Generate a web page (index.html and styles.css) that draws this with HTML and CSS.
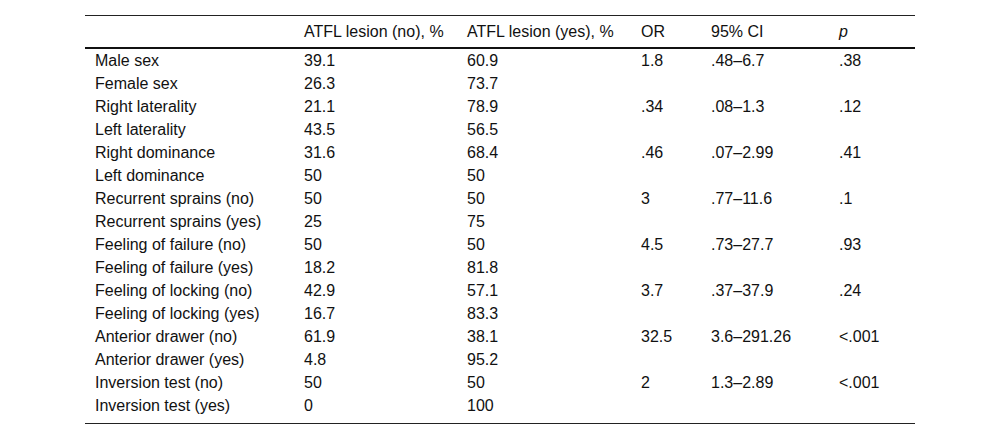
FILE: index.html
```html
<!DOCTYPE html>
<html lang="en">
<head>
<meta charset="utf-8">
<title>ATFL lesion table</title>
<link rel="stylesheet" href="styles.css">
</head>
<body>
<div class="wrap">
<table class="data">
<colgroup>
<col class="c1"><col class="c2"><col class="c3"><col class="c4"><col class="c5"><col class="c6">
</colgroup>
<thead>
<tr><th></th><th>ATFL lesion (no), %</th><th>ATFL lesion (yes), %</th><th>OR</th><th>95% CI</th><th><i>p</i></th></tr>
</thead>
<tbody>
<tr><td>Male sex</td><td>39.1</td><td>60.9</td><td>1.8</td><td>.48–6.7</td><td>.38</td></tr>
<tr><td>Female sex</td><td>26.3</td><td>73.7</td><td></td><td></td><td></td></tr>
<tr><td>Right laterality</td><td>21.1</td><td>78.9</td><td>.34</td><td>.08–1.3</td><td>.12</td></tr>
<tr><td>Left laterality</td><td>43.5</td><td>56.5</td><td></td><td></td><td></td></tr>
<tr><td>Right dominance</td><td>31.6</td><td>68.4</td><td>.46</td><td>.07–2.99</td><td>.41</td></tr>
<tr><td>Left dominance</td><td>50</td><td>50</td><td></td><td></td><td></td></tr>
<tr><td>Recurrent sprains (no)</td><td>50</td><td>50</td><td>3</td><td>.77–11.6</td><td>.1</td></tr>
<tr><td>Recurrent sprains (yes)</td><td>25</td><td>75</td><td></td><td></td><td></td></tr>
<tr><td>Feeling of failure (no)</td><td>50</td><td>50</td><td>4.5</td><td>.73–27.7</td><td>.93</td></tr>
<tr><td>Feeling of failure (yes)</td><td>18.2</td><td>81.8</td><td></td><td></td><td></td></tr>
<tr><td>Feeling of locking (no)</td><td>42.9</td><td>57.1</td><td>3.7</td><td>.37–37.9</td><td>.24</td></tr>
<tr><td>Feeling of locking (yes)</td><td>16.7</td><td>83.3</td><td></td><td></td><td></td></tr>
<tr><td>Anterior drawer (no)</td><td>61.9</td><td>38.1</td><td>32.5</td><td>3.6–291.26</td><td>&lt;.001</td></tr>
<tr><td>Anterior drawer (yes)</td><td>4.8</td><td>95.2</td><td></td><td></td><td></td></tr>
<tr><td>Inversion test (no)</td><td>50</td><td>50</td><td>2</td><td>1.3–2.89</td><td>&lt;.001</td></tr>
<tr class="last"><td>Inversion test (yes)</td><td>0</td><td>100</td><td></td><td></td><td></td></tr>
</tbody>
</table>
</div>
</body>
</html>
```
FILE: styles.css
```css
html, body {
  margin: 0;
  padding: 0;
  background: #fff;
}
body {
  font-family: "Liberation Sans", Arial, sans-serif;
  font-size: 16px;
  color: #111;
}
.wrap {
  padding: 15px 0 0 85px;
}
.data {
  width: 830px;
  table-layout: fixed;
  border-collapse: collapse;
  border-top: 1px solid #222;
  border-bottom: 1px solid #222;
}
.c1 { width: 209px; }
.c2 { width: 163px; }
.c3 { width: 174px; }
.c4 { width: 70px; }
.c5 { width: 128px; }
.c6 { width: 86px; }
.data th {
  font-weight: normal;
  text-align: left;
  line-height: 17px;
  padding: 7px 0 7px 10px;
  border-bottom: 2px solid #111;
  white-space: nowrap;
}
.data td {
  line-height: 17px;
  padding: 3px 0 3px 10px;
  white-space: nowrap;
}
.data tr.last td {
  padding-bottom: 9px;
}
```
